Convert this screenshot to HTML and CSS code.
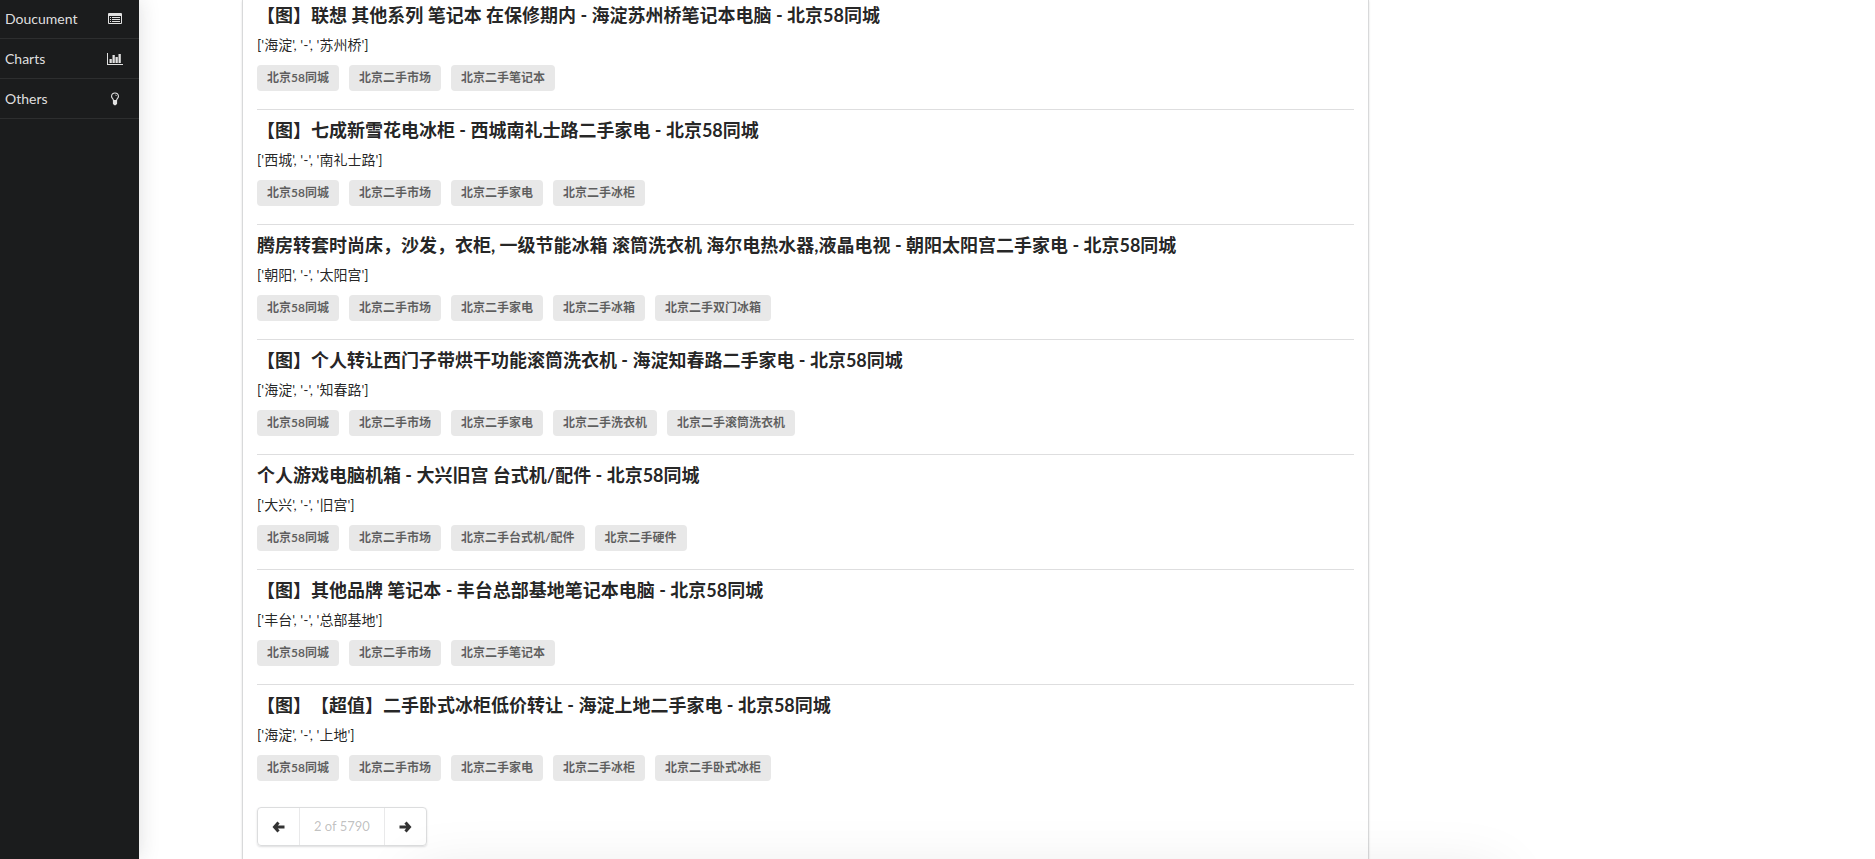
FILE: index.html
```html
<!DOCTYPE html>
<html lang="zh-CN">
<head>
<meta charset="utf-8">
<title>Search</title>
<link rel="stylesheet" href="styles.css">
</head>
<body>
<div class="layout">
<nav class="sidebar">
<a class="nav-item" href="#">Doucument<svg class="nav-icon" viewBox="0 0 16 16"><path fill-rule="evenodd" d="M2 2h12a1 1 0 0 1 1 1v9a1 1 0 0 1-1 1H2a1 1 0 0 1-1-1V3a1 1 0 0 1 1-1zM2 5v7h12V5zM3 6h1v1H3zm2 0h8v1H5zM3 8h1v1H3zm2 0h8v1H5zM3 10h1v1H3zm2 0h8v1H5z"/></svg></a>
<a class="nav-item" href="#">Charts<svg class="nav-icon" viewBox="0 0 16 16"><path d="M0 2h1v11h15v1H0zM2.500 8h2.300v4H2.500zM5.500 4h2.300v8H5.500zM8.500 6h2.300v6H8.500zM11.500 3h2.300v9h-2.300z"/></svg></a>
<a class="nav-item" href="#">Others<svg class="nav-icon" viewBox="0 0 16 16"><path fill-rule="evenodd" d="M8 1.500c2.400 0 4 1.700 4 3.700 0 1.200-.5 1.900-1.100 2.600-.4.600-.7 1.100-.8 1.700v2.900c0 .6-.4 1-.9 1-.3.600-.6.900-1.200.9s-.9-.3-1.200-.9c-.5 0-.9-.4-.9-1V9.500c-.1-.6-.4-1.100-.8-1.700C4.500 7.100 4 6.400 4 5.200c0-2 1.600-3.700 4-3.700zm0 1.100C6.300 2.600 5.100 3.800 5.100 5.200c0 .9.400 1.400.9 2 .5.600.8 1.100.9 1.800h2.200c.1-.7.400-1.200.9-1.800.5-.6.900-1.100.9-2 0-1.400-1.200-2.600-2.900-2.600zm0 1.100c.8 0 1.800.5 1.800 1.400h-.6C9.200 4.600 8.500 4.300 8 4.300z"/></svg></a>
</nav>
<main class="panel">
<ul class="results">
<li class="result"><h3 class="title">【图】联想 其他系列 笔记本 在保修期内 - 海淀苏州桥笔记本电脑 - 北京58同城</h3><p class="area">['海淀', '-', '苏州桥']</p><div class="tags"><span class="tag">北京58同城</span><span class="tag">北京二手市场</span><span class="tag">北京二手笔记本</span></div></li>
<li class="result"><h3 class="title">【图】七成新雪花电冰柜 - 西城南礼士路二手家电 - 北京58同城</h3><p class="area">['西城', '-', '南礼士路']</p><div class="tags"><span class="tag">北京58同城</span><span class="tag">北京二手市场</span><span class="tag">北京二手家电</span><span class="tag">北京二手冰柜</span></div></li>
<li class="result"><h3 class="title">腾房转套时尚床，沙发，衣柜, 一级节能冰箱 滚筒洗衣机 海尔电热水器,液晶电视 - 朝阳太阳宫二手家电 - 北京58同城</h3><p class="area">['朝阳', '-', '太阳宫']</p><div class="tags"><span class="tag">北京58同城</span><span class="tag">北京二手市场</span><span class="tag">北京二手家电</span><span class="tag">北京二手冰箱</span><span class="tag">北京二手双门冰箱</span></div></li>
<li class="result"><h3 class="title">【图】个人转让西门子带烘干功能滚筒洗衣机 - 海淀知春路二手家电 - 北京58同城</h3><p class="area">['海淀', '-', '知春路']</p><div class="tags"><span class="tag">北京58同城</span><span class="tag">北京二手市场</span><span class="tag">北京二手家电</span><span class="tag">北京二手洗衣机</span><span class="tag">北京二手滚筒洗衣机</span></div></li>
<li class="result"><h3 class="title">个人游戏电脑机箱 - 大兴旧宫 台式机/配件 - 北京58同城</h3><p class="area">['大兴', '-', '旧宫']</p><div class="tags"><span class="tag">北京58同城</span><span class="tag">北京二手市场</span><span class="tag">北京二手台式机/配件</span><span class="tag">北京二手硬件</span></div></li>
<li class="result"><h3 class="title">【图】其他品牌 笔记本 - 丰台总部基地笔记本电脑 - 北京58同城</h3><p class="area">['丰台', '-', '总部基地']</p><div class="tags"><span class="tag">北京58同城</span><span class="tag">北京二手市场</span><span class="tag">北京二手笔记本</span></div></li>
<li class="result"><h3 class="title">【图】【超值】二手卧式冰柜低价转让 - 海淀上地二手家电 - 北京58同城</h3><p class="area">['海淀', '-', '上地']</p><div class="tags"><span class="tag">北京58同城</span><span class="tag">北京二手市场</span><span class="tag">北京二手家电</span><span class="tag">北京二手冰柜</span><span class="tag">北京二手卧式冰柜</span></div></li>
</ul>
<div class="pager">
<button class="page-button" type="button" aria-label="Previous page"><svg class="arrow" viewBox="0 0 14 14"><path d="M6.500 2.500L2.500 7l4 4.500M3 7h9.500"/></svg></button>
<span class="page-status">2 of 5790</span>
<button class="page-button" type="button" aria-label="Next page"><svg class="arrow" viewBox="0 0 14 14"><path d="M7.500 2.500l4 4.500-4 4.500M11 7H1.500"/></svg></button>
</div>
</main>
</div>
<div class="bottom-shade"></div>
</body>
</html>
```
FILE: styles.css
```css
* { box-sizing: border-box; }
html, body { height: 100%; }
body {
  margin: 0;
  overflow: hidden;
  background: #fff;
  color: rgba(0, 0, 0, .87);
  font-family: Lato, "Noto Sans CJK SC", sans-serif;
  font-size: 14px;
  text-spacing-trim: space-all;
}
.layout { display: flex; height: 100%; }
.sidebar {
  flex: 0 0 139px;
  background: #1b1c1d;
  box-shadow: 0 0 20px rgba(34, 36, 38, .15);
}
.nav-item {
  display: flex;
  align-items: center;
  justify-content: space-between;
  height: 40px;
  padding: 0 16px 0 5px;
  border-bottom: 1px solid #2d2e2f;
  color: rgba(255, 255, 255, .87);
  text-decoration: none;
}
.nav-item:first-child { margin-top: -1px; }
.nav-icon { width: 16px; height: 16px; fill: currentColor; }
.panel {
  flex: 0 1 1127px;
  min-height: 100%;
  margin-left: 103px;
  padding: 0 14px;
  border: 1px solid #d8d9da;
  border-width: 0 1px;
  box-shadow: 0 1px 2px rgba(34, 36, 38, .15);
}
.results { margin: 0; padding: 0; list-style: none; }
.result { padding: 9px 0 18px; border-bottom: 1px solid #dededf; }
.result:first-child { padding-top: 4px; }
.result:last-child { border-bottom: 0; }
.title { margin: 0 0 9px; font-size: 18px; line-height: 22px; font-weight: 700; }
.area { margin: 0 0 10px; line-height: 20px; }
.tags { display: flex; flex-wrap: wrap; gap: 10px; }
.tag {
  padding: 0 10px;
  border-radius: 4px;
  background: #e8e8e8;
  color: rgba(0, 0, 0, .6);
  font-size: 12px;
  line-height: 26px;
  font-weight: 700;
}
.pager {
  display: inline-flex;
  height: 39px;
  margin-top: 8px;
  border: 1px solid #dcddde;
  border-radius: 4px;
  box-shadow: 0 1px 2px rgba(34, 36, 38, .15);
}
.page-button {
  display: flex;
  align-items: center;
  justify-content: center;
  width: 41px;
  padding: 0;
  border: 0;
  background: none;
  color: rgba(0, 0, 0, .8);
}
.arrow { width: 14px; height: 14px; fill: none; stroke: currentColor; stroke-width: 3; }
.page-status {
  padding: 0 14px;
  border: 1px solid #e9e9ea;
  border-width: 0 1px;
  color: rgba(40, 40, 40, .3);
  font-size: 13px;
  line-height: 37px;
}
.bottom-shade {
  position: fixed;
  top: 100%;
  left: 22%;
  right: 20%;
  height: 100px;
  box-shadow: 0 14px 60px rgba(0, 0, 0, .1);
  pointer-events: none;
}
```
